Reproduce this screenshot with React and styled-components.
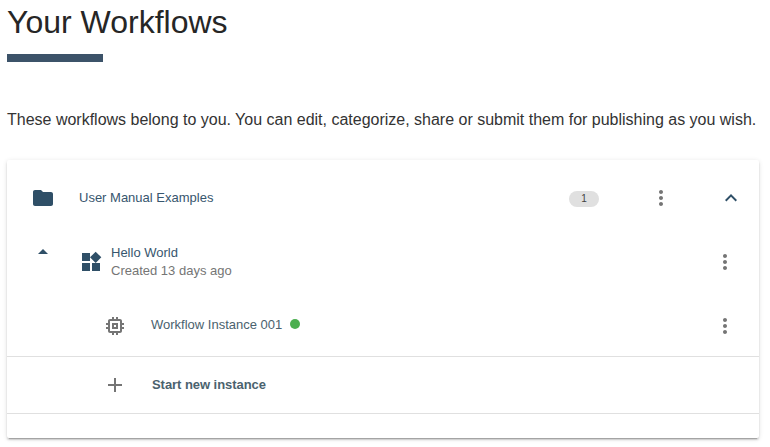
import React from 'react';
import styled, { createGlobalStyle } from 'styled-components';

const Global = createGlobalStyle`
  * { box-sizing: border-box; }
  body { margin: 0; background: #fff; font-family: "Liberation Sans", Arial, sans-serif; overflow: hidden; }
`;
const Page = styled.main`
  padding: 4px 11px 0 7px;
  height: 447px;
`;
const Title = styled.h1`
  margin: 0;
  font-size: 32px;
  line-height: 36px;
  font-weight: 400;
  color: #262626;
`;
const Rule = styled.div`
  width: 96px;
  height: 8px;
  margin-top: 14px;
  background: #3c5369;
`;
const Intro = styled.p`
  margin: 46px 0 0;
  font-size: 16px;
  line-height: 24px;
  letter-spacing: -0.005px;
  white-space: nowrap;
  color: #333;
`;
const Card = styled.section`
  margin-top: 28px;
  height: 278px;
  background: #fff;
  border-radius: 2px;
  box-shadow: 0 3px 1px -2px rgba(0,0,0,.2), 0 2px 2px 0 rgba(0,0,0,.14), 0 1px 5px 0 rgba(0,0,0,.12);
`;
const Row = styled.div`
  display: flex;
  align-items: center;
  height: ${p => p.$h}px;
  padding-top: ${p => p.$top || 0}px;
  padding-left: ${p => p.$indent}px;
  padding-right: ${p => p.$end}px;
  border-bottom: ${p => (p.$line ? '1px solid #e0e0e0' : '0')};
`;
const Icon = styled.svg`
  display: block;
  flex: none;
  width: 24px;
  height: 24px;
  margin-right: ${p => p.$gap || 0}px;
  fill: ${p => p.$color || '#757575'};
`;
const Label = styled.span`
  padding-top: ${p => p.$drop || 0}px;
  font-size: 13px;
  line-height: 18px;
  font-weight: ${p => (p.$bold ? 700 : 400)};
  letter-spacing: ${p => p.$track || 0}px;
  color: ${p => p.$color || '#37566e'};
  white-space: nowrap;
`;
const Meta = styled(Label)`
  color: #757575;
`;
const TextGroup = styled.div`
  display: flex;
  flex-direction: ${p => (p.$inline ? 'row' : 'column')};
  align-items: ${p => (p.$inline ? 'center' : 'flex-start')};
  margin-bottom: ${p => (p.$inline ? 4 : 0)}px;
`;
const Spacer = styled.div`
  flex: 1;
`;
const Badge = styled.span`
  width: 30px;
  height: 16px;
  margin: 1px 50px 0 0;
  border-radius: 8px;
  background: #e0e0e0;
  font-size: 10px;
  line-height: 16px;
  text-align: center;
  color: #424242;
`;
const Dot = styled.i`
  width: 10px;
  height: 10px;
  margin-left: 8px;
  border-radius: 50%;
  background: #4caf50;
`;

const blue = '#2f4f67';
const slate = '#4a626e';
const paths = {
  folder: 'M10 4H4c-1.1 0-1.99.9-1.99 2L2 18c0 1.1.9 2 2 2h16c1.1 0 2-.9 2-2V8c0-1.1-.9-2-2-2h-8l-2-2z',
  more: 'M12 8c1.1 0 2-.9 2-2s-.9-2-2-2-2 .9-2 2 .9 2 2 2zm0 2c-1.1 0-2 .9-2 2s.9 2 2 2 2-.9 2-2-.9-2-2-2zm0 6c-1.1 0-2 .9-2 2s.9 2 2 2 2-.9 2-2-.9-2-2-2z',
  less: 'M12 8l-6 6 1.41 1.41L12 10.83l4.59 4.58L18 14z',
  up: 'M7 14l5-5 5 5z',
  widgets: 'M13 13v8h8v-8h-8zM3 21h8v-8H3v8zM3 3v8h8V3H3zm13.66-1.31L11 7.34 16.66 13l5.66-5.66-5.66-5.65z',
  chip: 'M15 9H9v6h6V9zm-2 4h-2v-2h2v2zm8-2V9h-2V7c0-1.1-.9-2-2-2h-2V3h-2v2h-2V3H9v2H7c-1.1 0-2 .9-2 2v2H3v2h2v2H3v2h2v2c0 1.1.9 2 2 2h2v2h2v-2h2v2h2v-2h2c1.1 0 2-.9 2-2v-2h2v-2h-2v-2h2zm-4 6H7V7h10v10z',
  add: 'M19 13h-6v6h-2v-6H5v-2h6V5h2v6h6v2z',
};
const Glyph = ({ name, gap, color }) => (
  <Icon viewBox="0 0 24 24" $gap={gap} $color={color} aria-hidden="true">
    <path d={paths[name]} />
  </Icon>
);

const ToggleSlot = styled.div`
  display: flex;
  align-self: flex-start;
  margin: 4px 24px 0 0;
`;

export default function App() {
  return (
    <Page>
      <Global />
      <Title>Your Workflows</Title>
      <Rule />
      <Intro>These workflows belong to you. You can edit, categorize, share or submit them for publishing as you wish.</Intro>
      <Card>
        <Row $h={76} $indent={24} $end={16}>
          <Glyph name="folder" color={blue} gap={24} />
          <Label>User Manual Examples</Label>
          <Spacer />
          <Badge>1</Badge>
          <Glyph name="more" gap={46} />
          <Glyph name="less" color={blue} />
        </Row>
        <Row $h={52} $indent={24} $end={22}>
          <ToggleSlot><Glyph name="up" color={blue} /></ToggleSlot>
          <Glyph name="widgets" color={blue} gap={8} />
          <TextGroup>
            <Label>Hello World</Label>
            <Meta>Created 13 days ago</Meta>
          </TextGroup>
          <Spacer />
          <Glyph name="more" />
        </Row>
        <Row $h={69} $top={8} $indent={96} $end={22} $line>
          <Glyph name="chip" gap={24} />
          <TextGroup $inline>
            <Label $color={slate} $drop={2}>Workflow Instance 001</Label>
            <Dot />
          </TextGroup>
          <Spacer />
          <Glyph name="more" />
        </Row>
        <Row $h={57} $indent={96} $end={22} $line>
          <Glyph name="add" gap={25} />
          <Label $bold $color={slate} $track={-0.05}>Start new instance</Label>
        </Row>
      </Card>
    </Page>
  );
}
